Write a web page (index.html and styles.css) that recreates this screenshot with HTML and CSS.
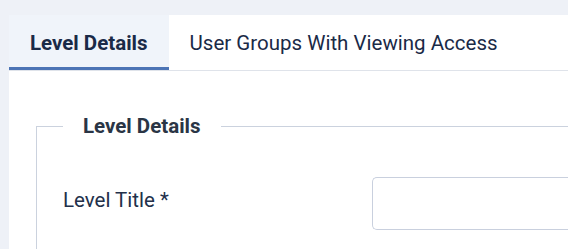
FILE: index.html
```html
<!DOCTYPE html>
<html lang="en">
<head>
  <meta charset="UTF-8">
  <meta name="viewport" content="width=device-width, initial-scale=1.0">
  <title>Edit Viewing Access Level</title>
  <link rel="stylesheet" href="styles.css">
</head>
<body>

  <div class="card">
    <div class="tab-list" role="tablist">
      <button class="tab active" role="tab">Level Details</button>
      <button class="tab" role="tab">User Groups With Viewing Access</button>
    </div>

    <div class="tab-panel">
      <fieldset class="options-form">
        <legend>Level Details</legend>
        <div class="control-group">
          <label class="control-label" for="jform_title">Level Title *</label>
          <div class="controls">
            <input type="text" id="jform_title" class="form-control">
          </div>
        </div>
      </fieldset>
    </div>
  </div>

</body>
</html>
```

FILE: styles.css
```css
html, body {
  height: 100%;
}
body {
  margin: 0;
  padding: 15px 0 0 9px;
  box-sizing: border-box;
  font-family: Roboto, "Liberation Sans", sans-serif;
  background-color: #eef1f7;
  color: #22262a;
  overflow: hidden;
}
.card {
  height: 100%;
  background: white;
}
.tab-list {
  display: flex;
  border-bottom: 1px solid #dfe3ea;
}
.tab {
  height: 55px;
  padding: 0 21px;
  font-family: inherit;
  font-size: 20.5px;
  color: #1a2a47;
  background: transparent;
  border: none;
  cursor: pointer;
}
.tab.active {
  font-weight: 700;
  background-color: #f0f4fa;
  box-shadow: inset 0 -3px 0 #4c74b5;
}
.tab-panel {
  padding: 40px 0 0 27px;
}
.options-form {
  margin: 0;
  padding: 10px 0 19px 26px;
  border: 1px solid #cbd2de;
  border-right: none;
  border-bottom: none;
}
.options-form legend {
  padding: 0 20px;
  font-size: 20.5px;
  font-weight: 700;
  line-height: 30px;
  color: #2a3545;
}
.control-group {
  display: flex;
  align-items: flex-start;
  margin-top: 26px;
}
.control-label {
  flex: 0 0 309px;
  padding-top: 8px;
  font-size: 20.5px;
  line-height: 30px;
  color: #22304a;
}
.controls {
  flex: 1;
}
.form-control {
  display: block;
  width: 100%;
  height: 53px;
  box-sizing: border-box;
  border: 1px solid #c9d0de;
  border-right: none;
  border-radius: 5px 0 0 5px;
  font-size: 16px;
}
```
